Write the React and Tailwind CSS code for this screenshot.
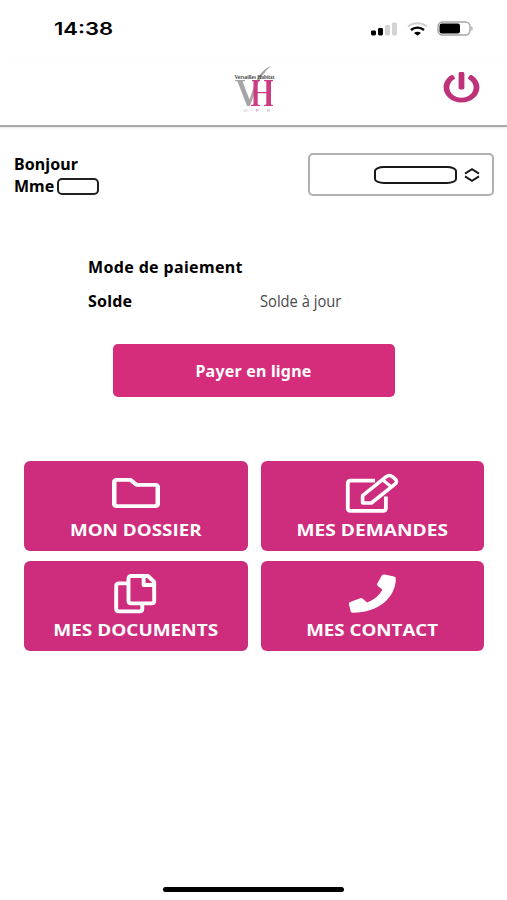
import { FaPowerOff, FaRegFolder } from 'react-icons/fa'

const TILES = [
  { label: 'MON DOSSIER', icon: FolderIcon, textClass: 'scale-x-[1.14]' },
  { label: 'MES DEMANDES', icon: EditIcon, textClass: 'scale-x-[1.16]' },
  { label: 'MES DOCUMENTS', icon: CopyIcon, textClass: 'scale-x-[1.15]' },
  { label: 'MES CONTACT', icon: PhoneIcon, textClass: 'scale-x-[1.135]' },
]

function FolderIcon() {
  return <FaRegFolder preserveAspectRatio="none" className="h-[40px] w-12" />
}

function EditIcon() {
  return (
    <svg className="h-[41px] w-[54px]" viewBox="0 0 54 41" fill="none" stroke="currentColor" strokeWidth="3.8" strokeLinejoin="round">
      <path d="M30 7.7H5.6Q2.8 7.7 2.8 10.5V35Q2.8 37.8 5.6 37.8H38Q40.900 37.800 40.900 35V23.500" />
      <path d="M17.600 30V22.600L41.200 3.700Q44.400 1.300 47.600 3.800L50 5.800Q53 8.500 50 11.200L26.400 30Z" strokeWidth="3.6" />
      <path d="M37.500 6.800 46.500 14" strokeWidth="3.2" />
    </svg>
  )
}

function CopyIcon() {
  return (
    <svg className="h-[41px] w-[43px]" viewBox="0 0 43 41" fill="none" stroke="currentColor" strokeWidth="3.9" strokeLinejoin="round">
      <path d="M13 10.400H5Q2.200 10.400 2.200 13V35.800Q2.200 38.400 5 38.400H25.500Q28.300 38.400 28.300 35.800V31" />
      <path d="M17.300 3H34L40.200 9V27.800Q40.200 30.400 37.400 30.400H17.300Q14.500 30.400 14.500 27.800V5.600Q14.500 3 17.300 3Z" />
      <path d="M29.600 4V12H39" />
    </svg>
  )
}

function PhoneIcon() {
  return (
    <svg className="h-[41px] w-[49px]" viewBox="0 0 49 41" fill="currentColor">
      <path d="M36.600 1.600 46 3.600Q47.800 4 47.800 5.600C47.800 25 30 39.800 5 39.800Q3.200 39.800 2.700 38.300L.9 30.900Q.6 29.500 2.200 28.900L12.300 25.200Q13.700 24.700 14.800 25.800L19 29.500C26 27 31.500 22.500 34.300 16.500L29.800 12.900Q28.600 12 29.200 10.700L33.800 2.600Q34.800 1.200 36.600 1.600Z" />
    </svg>
  )
}

function StatusBar() {
  return (
    <div className="flex h-[57px] items-center justify-between pl-[54px] pr-[34px]">
      <span className="origin-left scale-x-[1.26] font-['Inter'] text-[17.5px] font-semibold leading-none">14:38</span>
      <div className="flex items-center">
        <svg className="h-[14px] w-[26px]" viewBox="0 0 26 14">
          <rect x="0" y="8.5" width="5" height="5" rx="1.4" fill="#000" />
          <rect x="7" y="6" width="5" height="7.5" rx="1.4" fill="#000" />
          <rect x="14" y="3" width="5" height="10.5" rx="1.4" fill="#d3d3d3" />
          <rect x="21" y="0.5" width="5" height="13" rx="1.4" fill="#d3d3d3" />
        </svg>
        <svg className="ml-[10px] h-[14px] w-[21px]" viewBox="0 0 21 14" fill="none">
          <path d="M1 4.600C6.200 0.200 14.800 0.200 20 4.600" stroke="#d0d0d0" strokeWidth="2" />
          <path d="M4 8C7.600 4.800 13.400 4.800 17 8" stroke="#000" strokeWidth="2.4" />
          <path d="M7 11c2.200-1.600 4.800-1.600 7 0L10.500 13.800z" fill="#000" />
        </svg>
        <svg className="ml-[9px] h-[15px] w-[36px]" viewBox="0 0 36 15">
          <rect x="1" y="1" width="32" height="13" rx="4.5" fill="#fff" stroke="#a6a6a6" strokeWidth="1.4" />
          <rect x="2.5" y="2.5" width="20.5" height="10" rx="2.2" fill="#000" />
          <path d="M34.300 5.200c1.800.6 1.800 4 0 4.600z" fill="#a6a6a6" />
        </svg>
      </div>
    </div>
  )
}

function Logo() {
  return (
    <svg className="-mt-[5px] h-[48px] w-[44px] overflow-visible" viewBox="0 0 44 48">
      <path d="M3 15h10v1L10.500 16.500 17.500 34.500 22.500 20C26 11 31 4 39 1C33 6 28 13 25 21L18 41H15L5.500 16.500 3 16z" fill="#a5a5a5" />
      <path
        d="M20 15h8v1l-2.300.6V27h8.600V16.600L32 16v-1h9v1l-2 .6v22.800l2 .6v1h-9v-1l2.300-.6V28.300h-8.600v11.100L28 40v1H19v-1l2.500-.6V16.600L20 16z"
        fill="#cb3c83"
      />
      <text x="2.500" y="14" textLength="40" lengthAdjust="spacingAndGlyphs" className="fill-[#444] font-['Liberation_Serif'] text-[6px] font-bold">
        Versailles Habitat
      </text>
      <g className="font-['Liberation_Sans'] text-[4px]">
        <text x="12" y="47" fill="#999">O</text>
        <text x="24" y="47" fill="#cb3c83">P</text>
        <text x="35" y="47" fill="#999">H</text>
      </g>
    </svg>
  )
}

function Header() {
  return (
    <header className="grid h-[70px] grid-cols-3 items-center border-b-2 border-[#aaa] px-[27px] shadow-[0_1px_2px_#e5e5e5]">
      <span />
      <div className="flex justify-center">
        <Logo />
      </div>
      <button className="justify-self-end" aria-label="Déconnexion">
        <FaPowerOff preserveAspectRatio="none" className="-mt-[7px] h-[31px] w-[37px] text-[#bd3279]" />
      </button>
    </header>
  )
}

function Tile({ label, icon: Icon, textClass }) {
  return (
    <button className="flex h-[90px] flex-col items-center rounded-[6px] bg-[#ce2d7e] text-white">
      <span className="mt-[11px] flex h-[42px] items-center">
        <Icon />
      </span>
      <span className={`mt-[4px] whitespace-nowrap font-['Open_Sans'] text-[16.5px] font-bold leading-6 ${textClass}`}>{label}</span>
    </button>
  )
}

export default function App() {
  return (
    <div className="flex h-[900px] w-[507px] flex-col overflow-hidden bg-white font-['Noto_Sans',sans-serif] text-black">
      <StatusBar />
      <Header />

      <section className="mt-[26px] flex items-start justify-between pl-[14px] pr-[13px]">
        <div className="text-[16px] font-bold leading-[22px]">
          <p className="tracking-[0.1px]">Bonjour</p>
          <div className="flex items-center">
            <p>Mme</p>
            <span className="ml-[3px] h-[17px] w-[42px] rounded-[5px] border-2 border-[#222]" />
          </div>
        </div>
        <div className="flex h-[43px] w-[186px] items-center justify-end rounded-[5px] border-2 border-[#b0b0b0] pr-[12px]">
          <span className="h-[18px] w-[83px] rounded-[10px/5px] border-2 border-[#181818]" />
          <svg className="ml-[7px] h-[14px] w-[16px]" viewBox="0 0 16 14" fill="none" stroke="#181818" strokeWidth="1.9">
            <path d="M1 5.600 8 1.200l7 4.400M1 8.400l7 4.400 7-4.400" />
          </svg>
        </div>
      </section>

      <section className="mt-[58px] grid grid-cols-[172px_1fr] pl-[88px] text-[16px] font-bold">
        <p className="col-span-2 h-[34px] leading-6 tracking-[0.35px]">Mode de paiement</p>
        <p className="leading-6 tracking-[0.2px]">Solde</p>
        <p className="w-max origin-left scale-x-[0.865] font-['Open_Sans'] text-[17px] font-normal leading-6 text-[#4a4a4a]">Solde à jour</p>
      </section>

      <button className="mt-[31px] h-[53px] w-[282px] self-center rounded-[5px] bg-[#d52d7b] text-[16px] font-bold tracking-[0.2px] text-white">
        Payer en ligne
      </button>

      <nav className="mt-[64px] grid grid-cols-2 gap-x-[13px] gap-y-[10px] pl-6 pr-[23px]">
        {TILES.map((tile) => (
          <Tile key={tile.label} {...tile} />
        ))}
      </nav>

      <div className="mb-[8px] mt-auto h-[5px] w-[181px] self-center rounded-full bg-black" />
    </div>
  )
}
